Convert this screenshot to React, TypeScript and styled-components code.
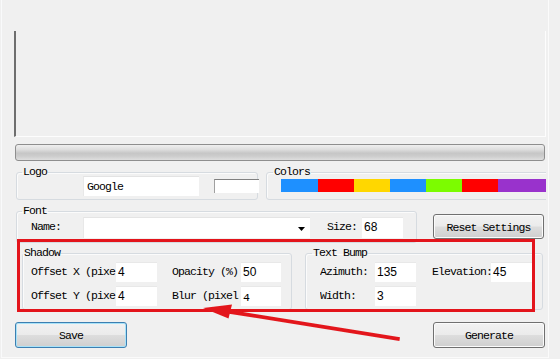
import React, { FC } from "react";
import styled, { createGlobalStyle } from "styled-components";

const GlobalStyle = createGlobalStyle`
  html, body {
    margin: 0;
    padding: 0;
    background: #f0f0f0;
  }
  * {
    box-sizing: border-box;
  }
`;

const COLORS = ["#1e90ff", "#ff0000", "#ffd700", "#1e90ff", "#7cfc00", "#ff0000", "#9932cc", "#9932cc"];

const App: FC = () => {
  return (
    <>
      <GlobalStyle />
      <Window>
        <Frame>
          <Main>
            <Preview />
            <Progress />

            <Row $top={5}>
              <Group $width={242} $left={2}>
                <Legend $left={5}>Logo</Legend>
                <GroupRow $pad="0 0 0 66px" $gap={15} $mt={-2}>
                  <TextInput $width={116}>Google</TextInput>
                  <SmallInput />
                </GroupRow>
              </Group>
              <Group $width={290} $left={8}>
                <Legend $left={6}>Colors</Legend>
                <GroupRow $pad="0 0 0 14px" $gap={0} $mt={-2}>
                  <ColorBar>
                    {COLORS.map((c, i) => (
                      <Swatch key={i} $color={c} $w={i === 0 ? 37 : 36} />
                    ))}
                  </ColorBar>
                </GroupRow>
              </Group>
            </Row>

            <Row $top={5}>
              <Group $width={401} $left={2} $height={38}>
                <Legend $left={5}>Font</Legend>
                <GroupRow $pad="0 0 0 14px" $gap={0} $mt={0}>
                  <Label $width={52}>Name:</Label>
                  <Combo>
                    <Caret width="7" height="4" viewBox="0 0 7 4">
                      <path d="M0 0h7L3.5 4z" fill="#000" />
                    </Caret>
                  </Combo>
                  <Label $width={35} $ml={17}>Size:</Label>
                  <NumInput $width={41} $height={21}>68</NumInput>
                </GroupRow>
              </Group>
              <Button $width={111} $height={25} $ml={16} $mt={9}>
                Reset Settings
              </Button>
            </Row>

            <Row $top={4}>
              <Group $width={270} $left={8} $height={63}>
                <Legend $left={0}>Shadow</Legend>
                <FieldGrid $cols="85px 41px 15px 69px 40px" $pad={8}>
                  <Label>Offset X (pixe</Label>
                  <NumInput>4</NumInput>
                  <span />
                  <Label>Opacity (%)</Label>
                  <NumInput>50</NumInput>
                  <Label>Offset Y (pixe</Label>
                  <NumInput>4</NumInput>
                  <span />
                  <Label>Blur (pixel</Label>
                  <NumInput $mono>4</NumInput>
                </FieldGrid>
              </Group>
              <Group $width={238} $left={13} $height={63}>
                <Legend $left={6}>Text Bump</Legend>
                <FieldGrid $cols="55px 41px 16px 59px 41px" $pad={14}>
                  <Label>Azimuth:</Label>
                  <NumInput>135</NumInput>
                  <span />
                  <Label>Elevation:</Label>
                  <NumInput>45</NumInput>
                  <Label>Width:</Label>
                  <NumInput>3</NumInput>
                </FieldGrid>
              </Group>
            </Row>

            <ButtonRow>
              <Button $width={112} $height={26} $default>
                Save
              </Button>
              <Button $width={112} $height={26}>
                Generate
              </Button>
            </ButtonRow>
          </Main>
        </Frame>

        <Highlight />
        <Arrow width="560" height="359" viewBox="0 0 560 359">
          <defs>
            <filter id="soft" x="-10%" y="-50%" width="120%" height="200%">
              <feGaussianBlur stdDeviation="0.4" />
            </filter>
          </defs>
          <g filter="url(#soft)" fill="#e3191c" stroke="none">
            <path d="M400 337.2 L228 309.6 L227.4 313.4 L399.4 341 Z" />
            <path d="M203 308 L232 304.5 L228.5 318.5 Z" />
          </g>
        </Arrow>
      </Window>
    </>
  );
};

export default App;

const Window = styled.div`
  position: relative;
  width: 560px;
  height: 359px;
  overflow: hidden;
  background: #f0f0f0;
  font-family: "Liberation Mono", "DejaVu Sans Mono", monospace;
  font-size: 11.5px;
  letter-spacing: -0.9px;
  color: #000;
`;

const Frame = styled.div`
  width: 548px;
  height: 358px;
  margin-left: 1px;
  border-left: 1px solid #f9fafb;
  border-right: 1px solid #fbfbfb;
  border-bottom: 1px solid #fafafa;
`;

const Main = styled.div`
  margin-left: 12px;
  width: 532px;
  height: 357px;
  overflow: hidden;
  display: flex;
  flex-direction: column;
`;

const Preview = styled.div`
  margin-top: 31px;
  height: 106px;
  width: 532px;
  border-left: 2px solid #6e6e6e;
  border-right: 1px solid #fdfdfd;
  border-bottom: 1px solid #fdfdfd;
`;

const Progress = styled.div`
  margin: 7px 0 0 1px;
  width: 530px;
  height: 17px;
  border: 1px solid #8e8e8e;
  border-radius: 3px;
  background: linear-gradient(
    to bottom,
    #efefef 0%,
    #dedede 30%,
    #c6c6c6 55%,
    #cdcdcd 75%,
    #dedede 100%
  );
`;

const Row = styled.div<{ $top: number }>`
  display: flex;
  align-items: flex-start;
  margin-top: ${(p) => p.$top}px;
  width: 560px;
`;

const Group = styled.fieldset<{ $width: number; $left: number; $height?: number }>`
  flex: none;
  width: ${(p) => p.$width}px;
  ${(p) => (p.$height ? `height: ${p.$height}px;` : "")}
  margin: 0 0 0 ${(p) => p.$left}px;
  padding: 0 0 3px;
  border: 1px solid #d6dbe0;
  border-radius: 3px;
  box-shadow: inset 1px 1px 0 #fbfbfb;
  min-width: 0;
`;

const Legend = styled.legend<{ $left: number }>`
  margin-left: ${(p) => p.$left}px;
  padding: 0 1px;
  line-height: 12px;
  height: 12px;
`;

const GroupRow = styled.div<{ $pad: string; $gap: number; $mt: number }>`
  display: flex;
  align-items: center;
  padding: ${(p) => p.$pad};
  gap: ${(p) => p.$gap}px;
  margin-top: ${(p) => p.$mt}px;
  height: 20px;
  white-space: nowrap;
`;

const Label = styled.span<{ $width?: number; $ml?: number }>`
  flex: none;
  ${(p) => (p.$width ? `width: ${p.$width}px;` : "")}
  margin-left: ${(p) => p.$ml ?? 0}px;
  white-space: nowrap;
  overflow: hidden;
  line-height: 20px;
`;

const TextInput = styled.div<{ $width: number }>`
  flex: none;
  width: ${(p) => p.$width}px;
  height: 20px;
  line-height: 19px;
  padding-left: 3px;
  background: #fff;
  border-top: 1px solid #e3e3e3;
  border-left: 1px solid #e8e8e8;
`;

const SmallInput = styled.div`
  flex: none;
  width: 45px;
  height: 14px;
  background: #fff;
  border-top: 1px solid #808080;
  border-left: 1px solid #a0a0a0;
`;

const ColorBar = styled.div`
  display: flex;
  height: 13px;
  margin-top: -1px;
`;

const Swatch = styled.div<{ $color: string; $w: number }>`
  flex: none;
  width: ${(p) => p.$w}px;
  height: 13px;
  background: ${(p) => p.$color};
`;

const Combo = styled.div`
  flex: none;
  position: relative;
  width: 227px;
  height: 21px;
  margin-top: 1px;
  background: #fff;
  border-top: 1px solid #e4e4e4;
  border-left: 1px solid #e8e8e8;
`;

const Caret = styled.svg`
  position: absolute;
  right: 5px;
  top: 9px;
`;

const NumInput = styled.div<{ $width?: number; $height?: number; $mono?: boolean }>`
  flex: none;
  ${(p) => (p.$width ? `width: ${p.$width}px;` : "")}
  height: ${(p) => p.$height ?? 20}px;
  line-height: ${(p) => (p.$mono ? 22 : 18)}px;
  padding-left: 2px;
  background: #fff;
  border-top: 1px solid #e8e8e8;
  font-family: ${(p) => (p.$mono ? "inherit" : '"Liberation Sans", Arial, sans-serif')};
  font-size: ${(p) => (p.$mono ? "11.5px" : "12px")};
  letter-spacing: ${(p) => (p.$mono ? "-0.9px" : "0")};
`;

const FieldGrid = styled.div<{ $cols: string; $pad: number }>`
  display: grid;
  grid-template-columns: ${(p) => p.$cols};
  grid-auto-rows: 20px;
  row-gap: 4px;
  margin-top: 3px;
  padding-left: ${(p) => p.$pad}px;
  align-items: center;
  white-space: nowrap;
`;

const Button = styled.div<{
  $width: number;
  $height: number;
  $ml?: number;
  $mt?: number;
  $default?: boolean;
}>`
  flex: none;
  display: flex;
  align-items: center;
  justify-content: center;
  width: ${(p) => p.$width}px;
  height: ${(p) => p.$height}px;
  margin-left: ${(p) => p.$ml ?? 0}px;
  margin-top: ${(p) => p.$mt ?? 0}px;
  border: 1px solid ${(p) => (p.$default ? "#3c7fb1" : "#707070")};
  border-radius: 3px;
  background: linear-gradient(to bottom, #f2f2f2 0%, #ebebeb 48%, #dddddd 52%, #cfcfcf 100%);
  box-shadow: inset 0 0 0 1px ${(p) => (p.$default ? "#a8e2f8" : "#fbfbfb")};
  padding-top: 1px;
`;

const ButtonRow = styled.div`
  display: flex;
  justify-content: space-between;
  width: 530px;
  margin: 12px 0 0 1px;
`;

const Highlight = styled.div`
  position: absolute;
  left: 17px;
  top: 239px;
  width: 518px;
  height: 73px;
  border: 3px solid #e3141b;
  pointer-events: none;
`;

const Arrow = styled.svg`
  position: absolute;
  left: 0;
  top: 0;
  pointer-events: none;
`;
